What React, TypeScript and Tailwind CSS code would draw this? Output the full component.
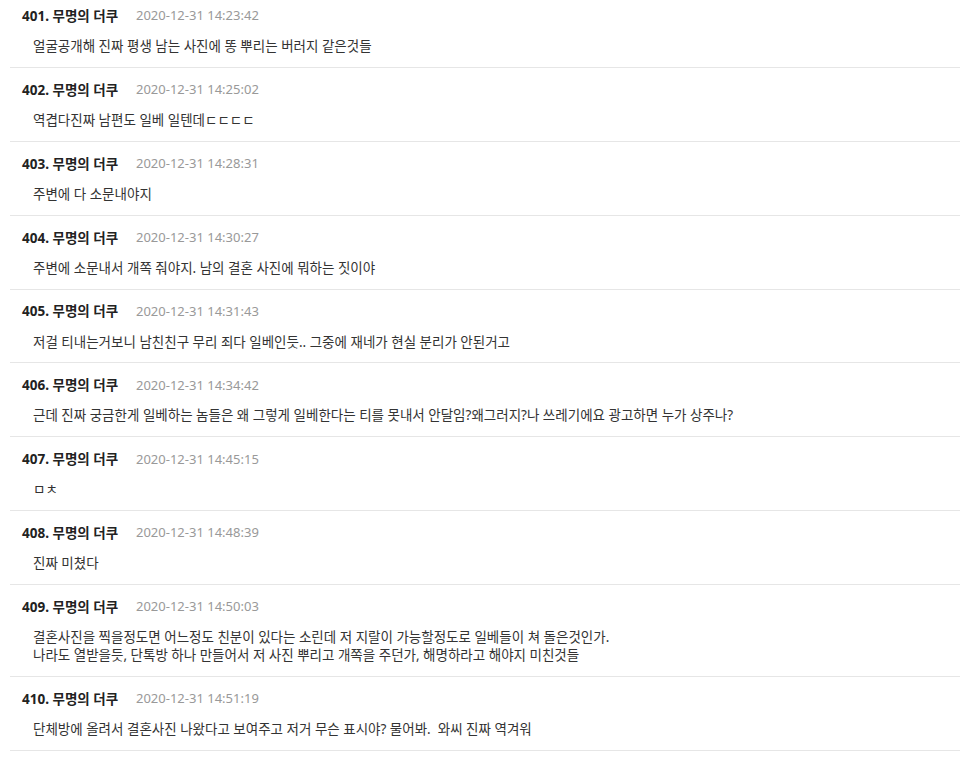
import React from "react";

type C = { n: number; time: string; lines: string[] };

const comments: C[] = [
  { n: 401, time: "2020-12-31 14:23:42", lines: ["얼굴공개해 진짜 평생 남는 사진에 똥 뿌리는 버러지 같은것들"] },
  { n: 402, time: "2020-12-31 14:25:02", lines: ["역겹다진짜 남편도 일베 일텐데ㄷㄷㄷㄷ"] },
  { n: 403, time: "2020-12-31 14:28:31", lines: ["주변에 다 소문내야지"] },
  { n: 404, time: "2020-12-31 14:30:27", lines: ["주변에 소문내서 개쪽 줘야지. 남의 결혼 사진에 뭐하는 짓이야"] },
  { n: 405, time: "2020-12-31 14:31:43", lines: ["저걸 티내는거보니 남친친구 무리 죄다 일베인듯.. 그중에 재네가 현실 분리가 안된거고"] },
  { n: 406, time: "2020-12-31 14:34:42", lines: ["근데 진짜 궁금한게 일베하는 놈들은 왜 그렇게 일베한다는 티를 못내서 안달임?왜그러지?나 쓰레기에요 광고하면 누가 상주나?"] },
  { n: 407, time: "2020-12-31 14:45:15", lines: ["ㅁㅊ"] },
  { n: 408, time: "2020-12-31 14:48:39", lines: ["진짜 미쳤다"] },
  {
    n: 409,
    time: "2020-12-31 14:50:03",
    lines: [
      "결혼사진을 찍을정도면 어느정도 친분이 있다는 소린데 저 지랄이 가능할정도로 일베들이 쳐 돌은것인가.",
      "나라도 열받을듯, 단톡방 하나 만들어서 저 사진 뿌리고 개쪽을 주던가, 해명하라고 해야지 미친것들",
    ],
  },
  { n: 410, time: "2020-12-31 14:51:19", lines: ["단체방에 올려서 결혼사진 나왔다고 보여주고 저거 무슨 표시야? 물어봐.  와씨 진짜 역겨워"] },
];

export default function App() {
  return (
    <div
      className="w-[960px] h-[758px] overflow-hidden bg-white"
      style={{ fontFamily: '"Noto Sans", "Noto Sans CJK KR", sans-serif' }}
    >
      <div className="ml-[10px]">
        {comments.map((c, i) => (
          <div
            key={c.n}
            className={`border-b border-[#e6e6e6] pb-[11.9px] ${i === 0 ? "pt-[6px]" : "pt-[12px]"}`}
          >
            <div className="flex items-center h-[20px] pl-[12px]">
              <span className="font-bold text-[#222] text-[13.5px] w-[114px]">{c.n}. 무명의 더쿠</span>
              <span className="text-[#999] text-[13px]">{c.time}</span>
            </div>
            <div className="mt-[11px] pl-[23px] text-[13.5px] text-[#333] leading-[18px] whitespace-pre">
              {c.lines.map((l, j) => (
                <div key={j}>{l}</div>
              ))}
            </div>
          </div>
        ))}
      </div>
    </div>
  );
}
